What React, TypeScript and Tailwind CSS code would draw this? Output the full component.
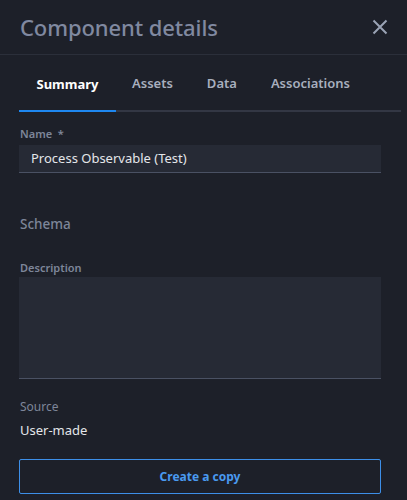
import React from "react";

export default function App() {
  return (
    <div
      className="w-[407px] h-[500px] bg-[#1d2029] overflow-hidden flex flex-col"
      style={{ fontFamily: '"Noto Sans", "Open Sans", sans-serif' }}
    >
      <div className="h-[55px] flex items-center justify-between pl-[20px] pr-[19px] border-b border-[#2b2f3a]">
        <div className="text-[22px] font-medium text-[#8089a0] leading-none tracking-[-0.1px] -mt-[1px]">Component details</div>
        <svg width="16" height="16" viewBox="0 0 16 16" className="text-[#9aa3b5]">
          <path d="M1.5 1.5 L14.5 14.5 M14.5 1.5 L1.5 14.5" stroke="currentColor" strokeWidth="2" />
        </svg>
      </div>
      <div className="pl-[19px] pr-[6px]">
        <div className="flex h-[57px] items-end border-b-2 border-[#333744]">
          <div className="w-[97px] h-full flex items-center justify-center pt-[2px] text-[13px] font-bold text-white -mb-[2px] border-b-2 border-[#1e87f0]">
            Summary
          </div>
          <div className="h-full flex items-center pt-[2px] pl-[16px] text-[13px] font-semibold text-[#a8afbe]">Assets</div>
          <div className="h-full flex items-center pt-[2px] pl-[34px] text-[13px] font-semibold text-[#a8afbe]">Data</div>
          <div className="h-full flex items-center pt-[2px] pl-[34px] text-[13px] font-semibold text-[#a8afbe]">Associations</div>
        </div>
      </div>
      <div className="pl-[19px] pr-[26px] flex flex-col">
        <div className="mt-[14px] text-[11px] font-semibold leading-[16px] text-[#7d8699] pl-[1px]">Name&nbsp; *</div>
        <div className="mt-[3px] h-[28px] bg-[#262a35] border-b border-[#4a5163] flex items-center pl-[12px] text-[13px] text-[#e4e6ea]">
          Process Observable (Test)
        </div>
        <div className="mt-[41px] text-[13.5px] font-medium leading-[20px] text-[#7d8699] pl-[1px]">Schema</div>
        <div className="mt-[26px] text-[11px] font-semibold leading-[16px] text-[#7d8699] pl-[1px]">Description</div>
        <div className="mt-[1px] h-[102px] bg-[#262a35] border-b border-[#4a5163]" />
        <div className="mt-[20px] text-[12px] leading-[16px] text-[#7d8699] pl-[1px]">Source</div>
        <div className="mt-[5px] text-[13px] leading-[20px] text-[#e4e6ea] pl-[1px]">User-made</div>
        <div className="mt-[19px] h-[35px] border border-[#3d8fe8] rounded-[2px] flex items-center justify-center text-[12px] font-bold text-[#4a9af0]">
          Create a copy
        </div>
      </div>
    </div>
  );
}
